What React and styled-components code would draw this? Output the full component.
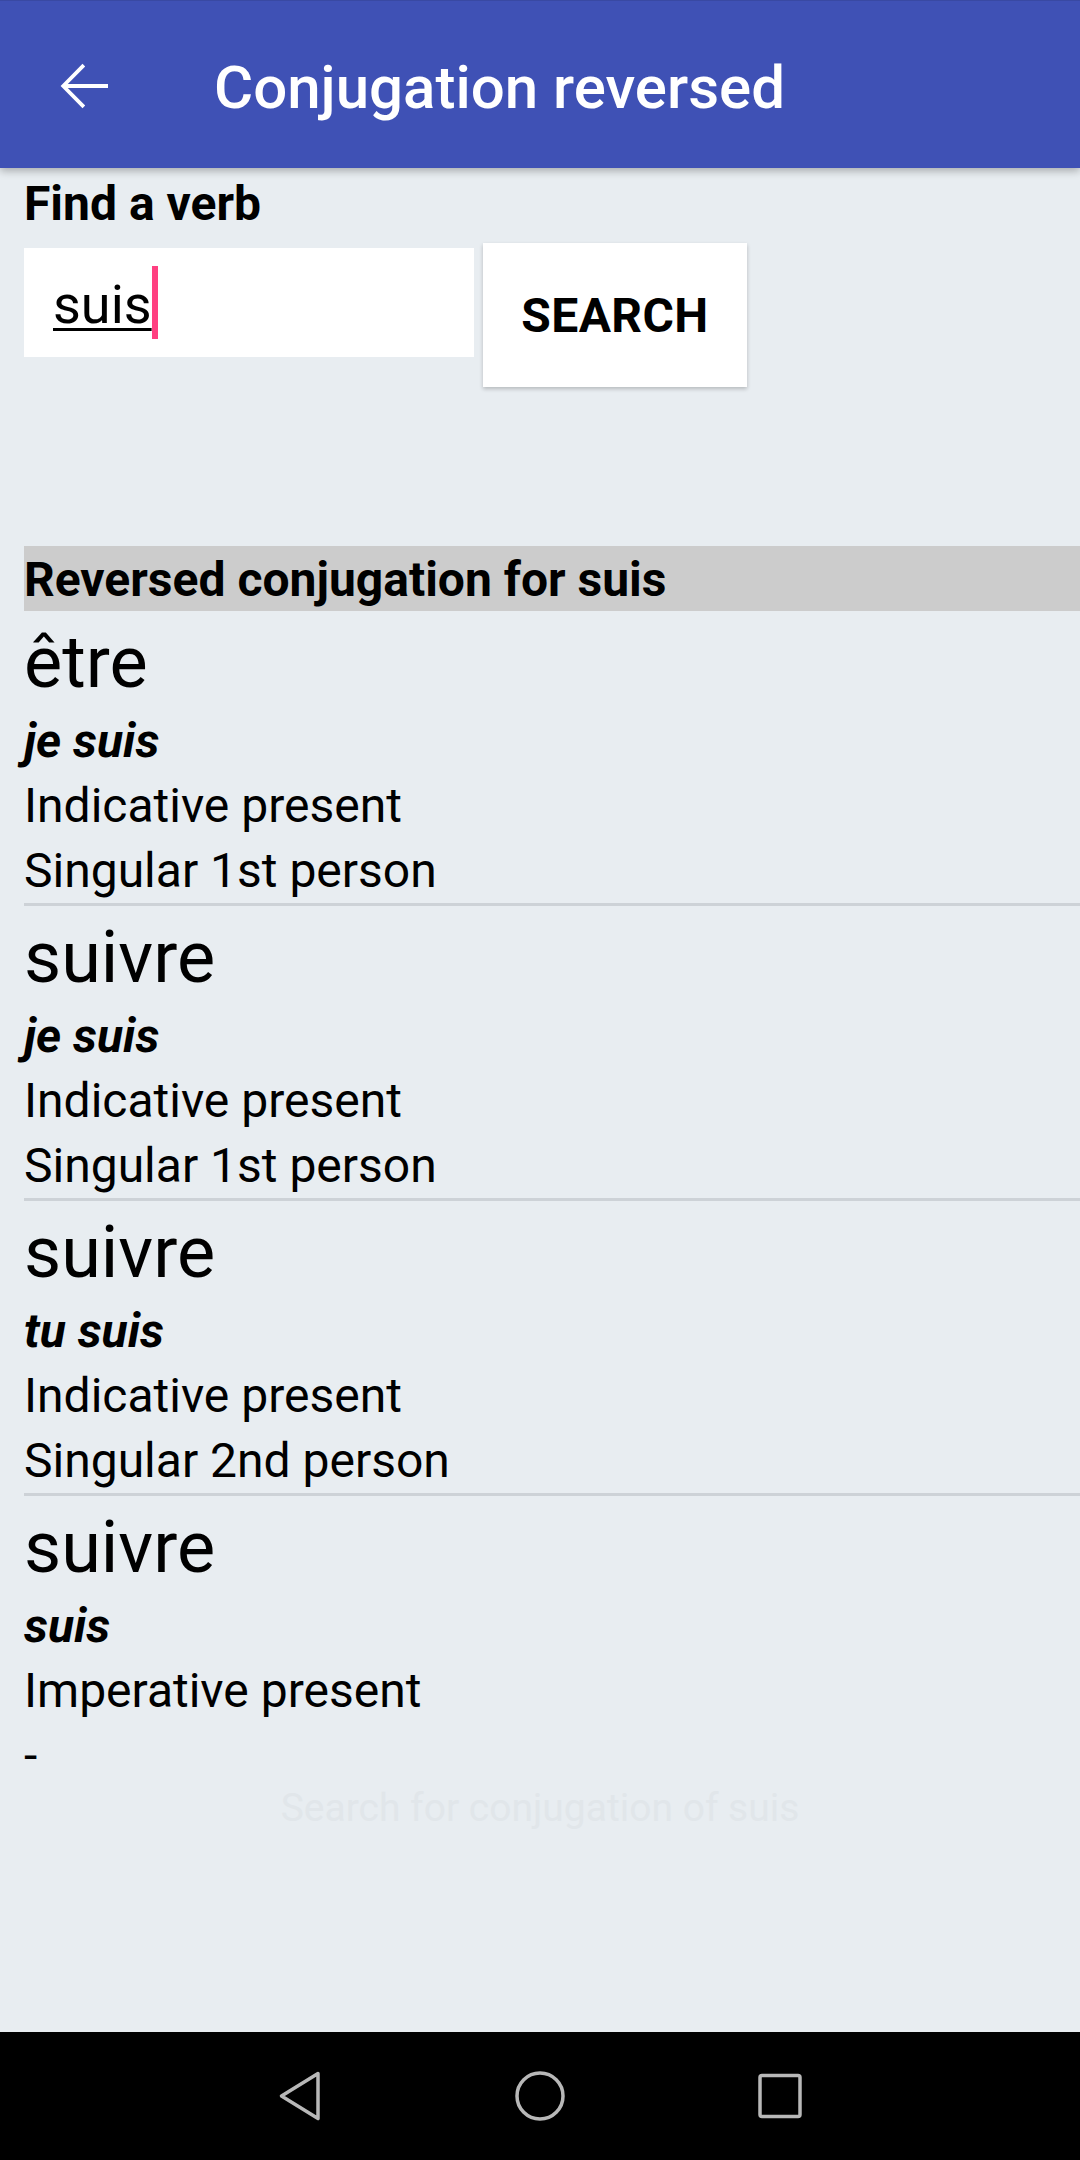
import React from "react";
import styled, { createGlobalStyle } from "styled-components";

const Global = createGlobalStyle`
  html, body { margin: 0; padding: 0; }
  body {
    background: #e8edf1;
    font-family: Roboto, "Noto Sans", "Liberation Sans", sans-serif;
    color: #000;
  }
  * { box-sizing: border-box; }
`;

const Page = styled.div`
  width: 1080px;
  height: 2160px;
  display: flex;
  flex-direction: column;
  background: #e8edf1;
  overflow: hidden;
`;

const AppBar = styled.header`
  position: relative;
  z-index: 1;
  height: 168px;
  flex: none;
  display: flex;
  align-items: center;
  background: #3f51b5;
  border-top: 1px solid #3949a3;
  box-shadow: 0 3px 8px rgba(0, 0, 0, 0.28);
`;

const NavButton = styled.button`
  width: 72px;
  height: 72px;
  margin: 2px 0 0 48px;
  padding: 0;
  border: 0;
  background: transparent;
  display: flex;
  align-items: center;
  justify-content: center;
`;

const Title = styled.h1`
  margin: 0 0 0 94px;
  padding-top: 7px;
  font-size: 60px;
  line-height: 70px;
  font-weight: 500;
  color: #fff;
`;

const Main = styled.main`
  flex: 1;
  display: flex;
  flex-direction: column;
`;

const SearchArea = styled.section`
  padding-left: 24px;
`;

const Label = styled.div`
  margin-top: 8px;
  font-size: 48px;
  line-height: 56px;
  font-weight: 700;
`;

const SearchRow = styled.div`
  margin-top: 11px;
  display: flex;
  align-items: flex-start;
  gap: 9px;
`;

const InputBox = styled.div`
  width: 450px;
  height: 109px;
  margin-top: 5px;
  background: #fff;
  display: flex;
  align-items: flex-start;
  padding-left: 29px;
`;

const Typed = styled.span`
  margin-top: 25px;
  font-size: 54px;
  line-height: 63px;
  text-decoration: underline;
  text-decoration-thickness: 3px;
  text-underline-offset: 5px;
`;

const Caret = styled.span`
  width: 6px;
  height: 73px;
  margin-top: 18px;
  background: #ff4081;
`;

const SearchButton = styled.button`
  width: 264px;
  height: 144px;
  border: 0;
  padding: 0;
  background: #fff;
  box-shadow: 0 2px 4px rgba(0, 0, 0, 0.22);
  font-family: inherit;
  font-size: 48px;
  font-weight: 700;
  letter-spacing: 0.4px;
  color: #000;
`;

const ResultHeader = styled.div`
  margin: 159px 0 0 24px;
  height: 65px;
  padding-top: 2px;
  background: #cccccc;
  font-size: 48px;
  line-height: 63px;
  font-weight: 700;
`;

const Entry = styled.div`
  margin-left: 24px;
  padding-top: 10px;
  border-bottom: ${(p) => (p.$last ? "none" : "3px solid #cdd2d7")};
`;

const Verb = styled.div`
  font-size: 72px;
  line-height: 84px;
`;

const Form = styled.div`
  margin-top: 4px;
  font-size: 48px;
  line-height: 64px;
  font-weight: 700;
  font-style: italic;
`;

const Line = styled.div`
  font-size: 48px;
  line-height: ${(p) => p.$lh}px;
`;

const FaintButton = styled.div`
  text-align: center;
  font-size: 39px;
  line-height: 40px;
  color: #e1e6ea;
`;

const NavBar = styled.nav`
  height: 128px;
  flex: none;
  background: #000;
  display: flex;
  justify-content: center;
  align-items: center;
  gap: 168px;
`;

const SysIcon = styled.svg`
  width: 72px;
  height: 72px;
  display: block;
`;

const entries = [
  { verb: "être", form: "je suis", tense: "Indicative present", person: "Singular 1st person" },
  { verb: "suivre", form: "je suis", tense: "Indicative present", person: "Singular 1st person" },
  { verb: "suivre", form: "tu suis", tense: "Indicative present", person: "Singular 2nd person" },
  { verb: "suivre", form: "suis", tense: "Imperative present", person: "-" },
];

export default function App() {
  return (
    <>
      <Global />
      <Page>
        <AppBar>
          <NavButton aria-label="Back">
            <svg width="72" height="72" viewBox="0 0 24 24">
              <path
                fill="#fff"
                d="M20 11.3H6.6l5.8-5.8-0.9-0.9L4.2 12l7.3 7.4 0.9-0.9-5.8-5.8H20z"
              />
            </svg>
          </NavButton>
          <Title>Conjugation reversed</Title>
        </AppBar>
        <Main>
          <SearchArea>
            <Label>Find a verb</Label>
            <SearchRow>
              <InputBox>
                <Typed>suis</Typed>
                <Caret />
              </InputBox>
              <SearchButton>SEARCH</SearchButton>
            </SearchRow>
          </SearchArea>
          <ResultHeader>Reversed conjugation for suis</ResultHeader>
          {entries.map((e, i) => (
            <Entry key={i} $last={i === entries.length - 1}>
              <Verb>{e.verb}</Verb>
              <Form>{e.form}</Form>
              <Line $lh={66}>{e.tense}</Line>
              <Line $lh={64}>{e.person}</Line>
            </Entry>
          ))}
          <FaintButton>Search for conjugation of suis</FaintButton>
        </Main>
        <NavBar>
          <SysIcon viewBox="0 0 72 72">
            <path
              d="M54 13.5 L17.5 36 L54 58.5 Z"
              fill="none"
              stroke="#b8b8b8"
              strokeWidth="3.5"
              strokeLinejoin="round"
            />
          </SysIcon>
          <SysIcon viewBox="0 0 72 72">
            <circle cx="36" cy="36" r="23" fill="none" stroke="#b8b8b8" strokeWidth="3.5" />
          </SysIcon>
          <SysIcon viewBox="0 0 72 72">
            <rect x="16" y="15.5" width="40" height="41" rx="2" fill="none" stroke="#b8b8b8" strokeWidth="3.5" />
          </SysIcon>
        </NavBar>
      </Page>
    </>
  );
}
